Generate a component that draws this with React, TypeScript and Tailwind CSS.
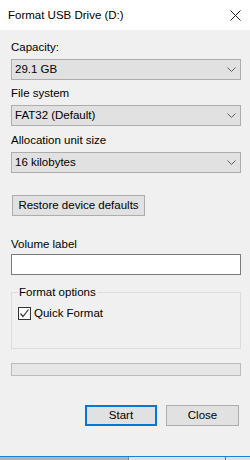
const font = { fontFamily: '"Liberation Sans", Arial, sans-serif' };

function Chevron() {
  return (
    <svg width="9" height="5" viewBox="0 0 9 5" className="shrink-0">
      <path d="M0.5 0.5 L4.5 4.5 L8.5 0.5" fill="none" stroke="#606060" strokeWidth="1" />
    </svg>
  );
}

function Combo({ value }: { value: string }) {
  return (
    <div className="flex h-[21px] w-[230px] items-center justify-between border border-[#adadad] bg-[#e1e1e1] pl-[3px] pr-[4px]">
      <span>{value}</span>
      <Chevron />
    </div>
  );
}

function Label({ text, mt, mb = "mb-[4px]" }: { text: string; mt: string; mb?: string }) {
  return <div className={`h-[15px] ${mt} ${mb}`}>{text}</div>;
}

export default function App() {
  return (
    <div className="flex h-[460px] w-[250px] flex-col bg-[#f0f0f0] text-[11.5px] leading-[15px] text-black" style={font}>
      <div className="flex h-[30px] shrink-0 items-center justify-between bg-white pl-[8px] pr-[9px]">
        <span>Format USB Drive (D:)</span>
        <svg width="11" height="11" viewBox="0 0 11 11">
          <path d="M0.5 0.5 L10.5 10.5 M10.5 0.5 L0.5 10.5" stroke="#222" strokeWidth="1" />
        </svg>
      </div>

      <div className="flex flex-1 flex-col pl-[11px]">
        <Label text="Capacity:" mt="mt-[10px]" />
        <Combo value="29.1 GB" />
        <Label text="File system" mt="mt-[6px]" />
        <Combo value="FAT32 (Default)" />
        <Label text="Allocation unit size" mt="mt-[7px]" />
        <Combo value="16 kilobytes" />

        <button className="ml-[1px] mt-[22px] flex h-[21px] w-[133px] items-center justify-center border border-[#adadad] bg-[#e1e1e1]">
          Restore device defaults
        </button>

        <Label text="Volume label" mt="mt-[21px]" mb="mb-[2px]" />
        <div className="h-[21px] w-[230px] border border-[#7a7a7a] bg-white" />

        <fieldset className="mt-[11px] h-[63px] w-[230px] border border-[#dcdcdc] px-[6px] pb-0 pt-0">
          <legend className="px-[1px] leading-[13px]">Format options</legend>
          <div className="mt-[7px] flex items-center gap-[3px]">
            <div className="flex h-[13px] w-[13px] items-center justify-center border border-[#333] bg-white">
              <svg width="11" height="11" viewBox="0 0 11 11">
                <path d="M1.5 5.5 L4 8.5 L9.5 1.5" fill="none" stroke="#333" strokeWidth="1.2" />
              </svg>
            </div>
            <span>Quick Format</span>
          </div>
        </fieldset>

        <div className="mt-[14px] h-[13px] w-[230px] border border-[#bcbcbc] bg-[#e6e6e6]" />

        <div className="mt-[29px] flex w-[230px] justify-end gap-[9px] pr-[2px]">
          <button className="h-[21px] w-[72px] border-2 border-[#0078d7] bg-[#e1e1e1]">Start</button>
          <button className="h-[21px] w-[73px] border border-[#adadad] bg-[#e1e1e1]">Close</button>
        </div>
      </div>

      <div className="h-[1px] shrink-0 bg-[#1883d7]" />
      <div className="flex h-[3px] shrink-0">
        <div className="w-[128px] bg-[#b4b4b4]" />
        <div className="w-[1px] bg-[#8a8a8a]" />
        <div className="w-[96px] bg-[#e0e0e0]" />
        <div className="w-[1px] bg-[#1883d7]" />
        <div className="flex-1 bg-[#e0e0e0]" />
      </div>
    </div>
  );
}
